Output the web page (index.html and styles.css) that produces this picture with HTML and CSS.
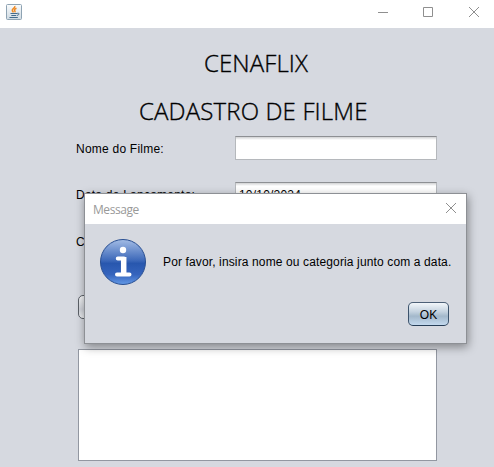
FILE: index.html
```
<!DOCTYPE html>
<html lang="pt-BR">
<head>
<meta charset="utf-8">
<title>Cenaflix</title>
<link rel="stylesheet" href="styles.css">
</head>
<body>
<div class="window">
  <header class="titlebar">
    <svg class="java" width="16" height="16" viewBox="0 0 16 16">
      <defs><linearGradient id="jg" x1="0" y1="0" x2="0" y2="1"><stop offset="0" stop-color="#fafcfd"/><stop offset="1" stop-color="#cfdae2"/></linearGradient></defs>
      <rect x=".5" y=".5" width="15" height="15" rx="1" fill="url(#jg)" stroke="#8ea3b3"/>
      <path d="M8.800 2C9.600 4 5.800 4.700 6.300 6.500C6.500 7.300 7.200 7.700 7.500 8.300M10.500 4.300C8.400 5 8 6 8.900 6.900C9.200 7.300 9 7.900 8.600 8.300" fill="none" stroke="#ee8a24" stroke-width="1.500"/>
      <path d="M4.500 9.500H11M5.300 11.500H10.300M3.500 13.500H11.800M11 9.500C13.800 8.500 13.600 11 11 11.400" fill="none" stroke="#426b8c" stroke-width="1"/>
    </svg>
    <svg class="controls" width="102" height="12" viewBox="0 0 102 12" fill="none" stroke="#8f8f8f">
      <path d="M0 6.500H10M45.500 1.500H54.500V10.500H45.500Z"/>
      <path d="M91 1L101 11M101 1L91 11"/>
    </svg>
  </header>
  <main class="content">
    <h1 class="heading brand">CENAFLIX</h1>
    <h2 class="heading subtitle">CADASTRO DE FILME</h2>
    <form class="form">
      <div class="row"><span class="label">Nome do Filme:</span><div class="field"></div></div>
      <div class="row"><span class="label">Data de Lançamento:</span><div class="field">10/10/2024</div></div>
      <div class="row category"><span class="label">C</span></div>
      <div class="button action"></div>
      <div class="listing"></div>
    </form>
  </main>
</div>
<section class="dialog" role="dialog">
  <header class="dialog-title">
    <span class="caption">Message</span>
    <svg width="12" height="12" viewBox="0 0 12 12" fill="none" stroke="#8f8f8f"><path d="M1 1L11 11M11 1L1 11"/></svg>
  </header>
  <div class="dialog-body">
    <svg class="info" width="48" height="48" viewBox="0 0 48 48">
      <defs><linearGradient id="ig" x1="0" y1="0" x2="0" y2="1"><stop offset="0" stop-color="#a3bce5"/><stop offset=".47" stop-color="#3c68b9"/><stop offset=".53" stop-color="#2857ae"/><stop offset=".78" stop-color="#3564bd"/><stop offset="1" stop-color="#6399e6"/></linearGradient></defs>
      <circle cx="24" cy="24" r="22.500" fill="url(#ig)" stroke="#294f92"/>
      <circle cx="24" cy="12" r="3.200" fill="#fff"/>
      <path d="M18.800 20.500H25V36.500M18 36.500H30.500" fill="none" stroke="#fff" stroke-width="4" stroke-linecap="round" stroke-linejoin="round"/>
      <path d="M24.700 19V37" stroke="#fff" stroke-width="5.500"/>
    </svg>
    <p class="message">Por favor, insira nome ou categoria junto com a data.</p>
  </div>
  <footer class="dialog-footer"><div class="button ok">OK</div></footer>
</section>
</body>
</html>
```
FILE: styles.css
```
* { box-sizing: border-box; }
body {
  margin: 0;
  width: 494px;
  height: 467px;
  overflow: hidden;
  background: #d6d9e0;
  color: #000;
  font: 12px/16px "Liberation Sans", Arial, sans-serif;
}
.titlebar {
  display: flex;
  justify-content: space-between;
  height: 28px;
  padding: 4px 14px 0 6px;
  background: #fff;
}
.titlebar .controls { margin: 2px 0 0; }
.content { padding-top: 19px; }
.heading {
  margin: 0;
  font: 300 24px/32px "Open Sans", "Noto Sans", sans-serif;
  -webkit-text-stroke: 0.35px #000;
  white-space: nowrap;
}
.brand { padding-left: 204px; letter-spacing: 0.1px; }
.subtitle { margin-top: 16px; padding-left: 139px; letter-spacing: 0.15px; }
.form { padding: 9px 57px 0 76px; }
.row {
  display: flex;
  justify-content: space-between;
  height: 24px;
  margin-bottom: 22px;
}
.category { margin-bottom: 0; padding-top: 1px; }
.label { padding-top: 5px; letter-spacing: 0.23px; white-space: nowrap; }
.field {
  width: 202px;
  height: 24px;
  padding: 4px 3px;
  border: 1px solid #b5b8bc;
  border-top-color: #8d8f93;
  background: linear-gradient(#d0d1d3, #fff 3px);
  letter-spacing: 0.2px;
}
.button {
  height: 24px;
  border: 1px solid #5b6068;
  border-radius: 5px;
}
.action {
  width: 100px;
  margin: 43px 0 30px 2px;
  background: linear-gradient(#f4f5f7, #d0d3da 60%, #eceef1);
}
.listing {
  width: 359px;
  height: 112px;
  margin-left: 2px;
  border: 1px solid #9297a1;
  background: #fff;
}
.dialog {
  position: absolute;
  left: 84px;
  top: 193px;
  width: 383px;
  height: 151px;
  border: 1px solid #8d9095;
  background: #d6d9e0;
  box-shadow: 1px 3px 9px rgba(0, 0, 0, .4);
}
.dialog-title {
  display: flex;
  justify-content: space-between;
  height: 30px;
  padding: 8px 9px 0 8px;
  background: #fff;
  color: #999;
}
.caption { font: 12px/15px "Open Sans", "Noto Sans", sans-serif; letter-spacing: -0.45px; }
.dialog-body { display: flex; padding: 14px 0 0 14px; }
.message { margin: 16px 0 0 16px; letter-spacing: 0.13px; white-space: nowrap; }
.dialog-footer { display: flex; justify-content: flex-end; padding: 16px 17px 0 0; }
.ok {
  width: 41px;
  padding-top: 4px;
  border-color: #4d6077 #3c536c #263d56;
  background: linear-gradient(#f2f6fa, #c4d2df 40%, #a3b8cb 60%, #c3d9ee);
  text-align: center;
}
```
